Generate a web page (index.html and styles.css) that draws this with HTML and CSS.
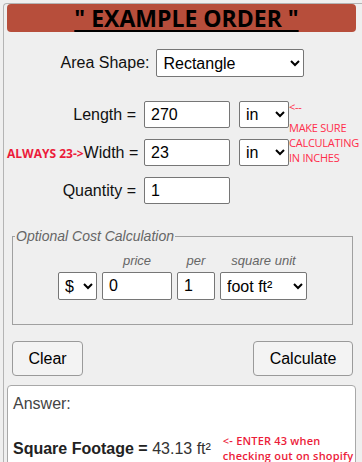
FILE: index.html
```html
<!DOCTYPE html>
<html lang="en">
<head>
  <meta charset="UTF-8">
  <meta name="viewport" content="width=device-width, initial-scale=1.0">
  <title>Example Order</title>
  <link rel="stylesheet" href="styles.css">
</head>
<body>

  <div class="page">
    <h1 class="title"><u>" EXAMPLE ORDER "</u></h1>

    <!-- Shape picker -->
    <div class="shape-row">
      <label for="shape">Area Shape:</label>
      <select id="shape" class="shape-select">
        <option>Rectangle</option>
      </select>
    </div>

    <!-- Dimensions -->
    <div class="dims">
      <label class="dim-label" for="len">Length =</label>
      <input id="len" class="dim-input" type="text" value="270">
      <select class="unit-select"><option>in</option></select>
      <div class="note-cell">
        <p class="note">&lt;--<br><span class="note-body">MAKE SURE<br>CALCULATING<br>IN INCHES</span></p>
      </div>

      <label class="dim-label" for="wid"><span class="note-bold">ALWAYS 23-&gt;</span>Width =</label>
      <input id="wid" class="dim-input" type="text" value="23">
      <select class="unit-select"><option>in</option></select>
      <div></div>

      <label class="dim-label" for="qty">Quantity =</label>
      <input id="qty" class="dim-input" type="text" value="1">
      <div></div>
      <div></div>
    </div>

    <fieldset class="cost">
      <legend>Optional Cost Calculation</legend>
      <div class="cost-row">
        <div class="cost-col">
          <span class="cost-label">&nbsp;</span>
          <select class="cur-select"><option>$</option></select>
        </div>
        <div class="cost-col">
          <span class="cost-label">price</span>
          <input class="price-input" type="text" value="0">
        </div>
        <div class="cost-col">
          <span class="cost-label">per</span>
          <input class="per-input" type="text" value="1">
        </div>
        <div class="cost-col">
          <span class="cost-label">square unit</span>
          <select class="sq-select"><option>foot ft²</option></select>
        </div>
      </div>
    </fieldset>

    <div class="buttons">
      <button class="btn btn-clear">Clear</button>
      <button class="btn btn-calc">Calculate</button>
    </div>

    <div class="answer">
      <p class="answer-head">Answer:</p>
      <div class="answer-line">
        <p class="result"><b>Square Footage =</b> 43.13 ft²</p>
        <p class="note-bold result-note">&lt;- ENTER 43 when<br>checking out on shopify</p>
      </div>
    </div>
  </div>

</body>
</html>
```

FILE: styles.css
```css
body {
  margin: 0;
  background-color: #efefef;
  font-family: "Liberation Sans", Arial, sans-serif;
  font-size: 16px;
  color: #111;
  overflow: hidden;
}

.page {
  margin: 3px 0 0 3px;
  padding: 0 6px 0 3px;
  border: 1px solid #b4b4b4;
  border-right: none;
  border-radius: 4px 0 0 4px;
  height: 480px;
}

.title {
  margin: 0;
  height: 28px;
  line-height: 28px;
  background-color: #b74e3b;
  border-radius: 4px;
  text-align: center;
  font-family: "Open Sans", sans-serif;
  font-size: 23px;
  font-weight: 700;
  color: #000;
  padding-left: 10px;
}

.title u {
  text-decoration-thickness: 2px;
  text-underline-offset: 3px;
}

/* Shape picker */
.shape-row {
  display: flex;
  justify-content: center;
  align-items: center;
  gap: 7px;
  margin-top: 17px;
  padding-left: 2px;
}

select, input {
  font-family: "Liberation Sans", Arial, sans-serif;
  font-size: 16px;
  color: #000;
  background-color: #fff;
  border: 1px solid #767676;
  border-radius: 2px;
  box-sizing: border-box;
  margin: 0;
}

input {
  padding: 0 6px;
}

select {
  padding: 0 2px;
}

.shape-select {
  width: 148px;
  height: 28px;
}

/* Dimensions */
.dims {
  display: grid;
  grid-template-columns: 129px 86px 50px 1fr;
  column-gap: 8px;
  row-gap: 11px;
  align-items: center;
  margin-top: 24px;
}

.dims .unit-select {
  margin-left: 1px;
}

.dim-label {
  text-align: right;
  white-space: nowrap;
}

.dim-input {
  width: 86px;
  height: 27px;
}

.unit-select {
  width: 50px;
  height: 27px;
}

.note-cell {
  position: relative;
  align-self: stretch;
  margin-left: -8px;
}

.note {
  position: absolute;
  top: -2px;
  left: 1px;
  margin: 0;
  font-family: "Open Sans", sans-serif;
  font-size: 11px;
  letter-spacing: -0.25px;
  line-height: 15px;
  color: #ff2d4b;
  white-space: nowrap;
}

.note-body {
  display: block;
  margin-top: 6px;
}

.note-bold {
  font-family: "Open Sans", sans-serif;
  font-weight: 700;
  font-size: 12px;
  color: #ec1c3a;
}

/* Cost */
.cost {
  margin: 24px 3px 0 5px;
  padding: 0 0 24px;
  border: 1px solid #a0a0a0;
}

.cost legend {
  padding: 0 1px;
  margin-left: 2px;
  font-style: italic;
  font-size: 14px;
  color: #666;
}

.cost-row {
  display: flex;
  justify-content: center;
  gap: 5px;
  margin-top: 9px;
}

.cost-col {
  display: flex;
  flex-direction: column;
  align-items: center;
}

.cost-label {
  font-style: italic;
  font-size: 13px;
  color: #666;
  line-height: 16px;
  margin-bottom: 3px;
}

.cur-select {
  width: 39px;
  height: 28px;
}

.price-input {
  width: 70px;
  height: 28px;
}

.per-input {
  width: 38px;
  height: 28px;
}

.sq-select {
  width: 87px;
  height: 28px;
}

/* Buttons */
.buttons {
  display: flex;
  justify-content: space-between;
  margin: 16px 3px 0 5px;
}

.btn {
  height: 35px;
  font-family: "Liberation Sans", Arial, sans-serif;
  font-size: 16px;
  color: #000;
  background-color: #f3f3f3;
  border: 1px solid #9a9a9a;
  border-radius: 4px;
}

.btn-clear {
  width: 71px;
}

.btn-calc {
  width: 100px;
}

/* Answer */
.answer {
  margin-top: 9px;
  padding: 8px 5px;
  background-color: #fff;
  border: 1px solid #a8a8a8;
  border-radius: 4px;
  height: 120px;
}

.answer-head {
  margin: 0;
  color: #444;
  line-height: 20px;
}

.answer-line {
  display: flex;
  align-items: flex-end;
  gap: 12px;
  margin-top: 19px;
}

.result {
  margin: 0 0 5px;
  color: #333;
  white-space: nowrap;
}

.result b {
  color: #222;
}

.result-note {
  margin: 0;
  line-height: 15px;
  font-weight: 600;
  font-size: 11px;
  letter-spacing: 0.2px;
  white-space: nowrap;
}
```
